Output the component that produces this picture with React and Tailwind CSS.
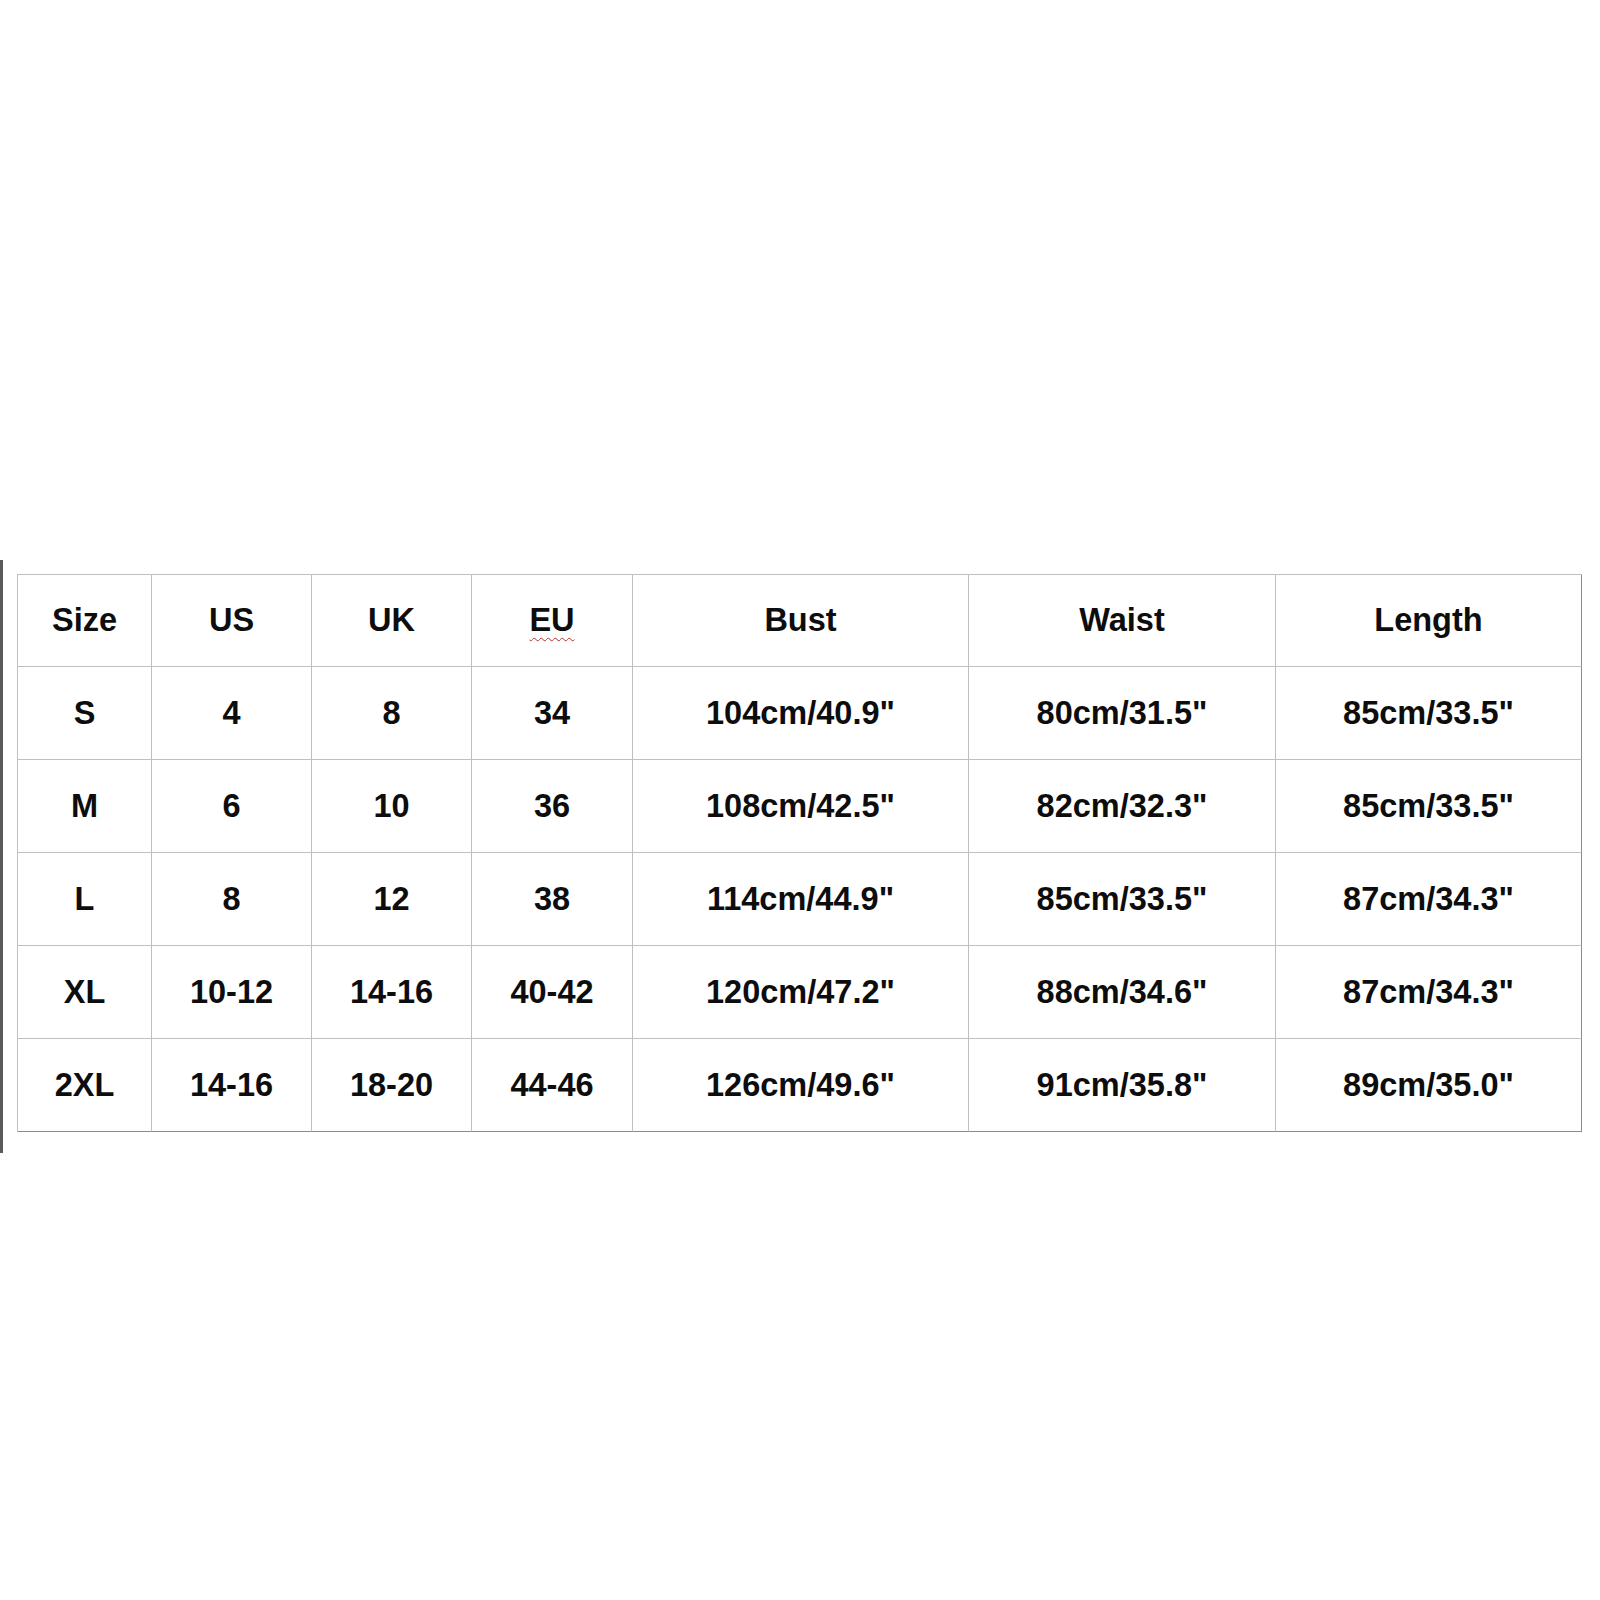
export default function App() {
  const headers = ["Size", "US", "UK", "EU", "Bust", "Waist", "Length"];
  const widths = ["w-[134px]", "w-[160px]", "w-[160px]", "w-[161px]", "w-[336px]", "w-[307px]", "w-[306px]"];

  const rows = [
    ["S", "4", "8", "34", "104cm/40.9\"", "80cm/31.5\"", "85cm/33.5\""],
    ["M", "6", "10", "36", "108cm/42.5\"", "82cm/32.3\"", "85cm/33.5\""],
    ["L", "8", "12", "38", "114cm/44.9\"", "85cm/33.5\"", "87cm/34.3\""],
    ["XL", "10-12", "14-16", "40-42", "120cm/47.2\"", "88cm/34.6\"", "87cm/34.3\""],
    ["2XL", "14-16", "18-20", "44-46", "126cm/49.6\"", "91cm/35.8\"", "89cm/35.0\""],
  ];

  return (
    <div className="w-[1600px] h-[1600px] bg-white font-['Liberation_Sans',Arial,sans-serif]">
      <div className="flex pt-[560px]">
        {/* left edge line */}
        <div className="w-[3px] h-[593px] bg-[#5a5a5a]" />

        {/* size chart */}
        <table className="ml-[14px] mt-[14px] h-fit table-fixed border-separate border-spacing-0 border-l border-t border-[#bfbfbf] text-[32.5px] font-bold text-[#0d0d0d]">
          <thead>
            <tr className="h-[92px]">
              {headers.map((h, i) => (
                <th
                  key={h}
                  className={`${widths[i]} p-0 text-center align-middle font-bold border-b border-r border-[#bfbfbf] ${i === 6 ? "border-r-[#8a8a8a]" : ""}`}
                >
                  {h === "EU" ? (
                    <span className="underline decoration-wavy decoration-[#b03030] decoration-1 underline-offset-[6px]">EU</span>
                  ) : (
                    h
                  )}
                </th>
              ))}
            </tr>
          </thead>
          <tbody>
            {rows.map((row, r) => (
              <tr key={r} className="h-[93px]">
                {row.map((cell, i) => (
                  <td
                    key={i}
                    className={`p-0 text-center align-middle border-b border-r border-[#bfbfbf] ${i === 6 ? "border-r-[#8a8a8a]" : ""} ${r === 4 ? "border-b-[#8a8a8a]" : ""}`}
                  >
                    {cell}
                  </td>
                ))}
              </tr>
            ))}
          </tbody>
        </table>
      </div>
    </div>
  );
}
